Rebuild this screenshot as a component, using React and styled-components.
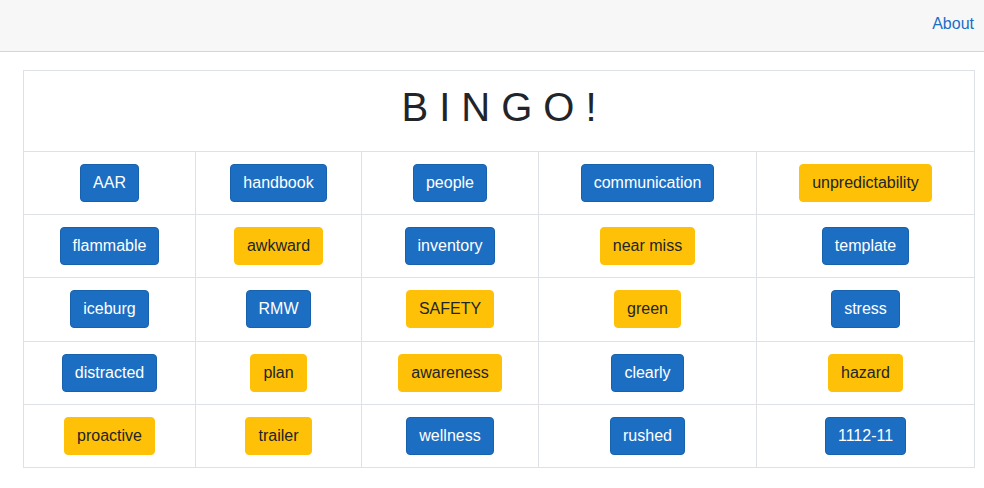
import React from 'react'
import styled, { createGlobalStyle } from 'styled-components'

const GlobalStyle = createGlobalStyle`
  html, body {
    margin: 0;
    padding: 0;
    background: #fff;
    font-family: "Liberation Sans", Arial, sans-serif;
    color: #212529;
  }
  * { box-sizing: border-box; }
`

const TopRow = styled.header`
  height: 52px;
  background: #f7f7f7;
  border-bottom: 1px solid #d6d5d5;
  display: flex;
  align-items: center;
  justify-content: flex-end;
  padding: 0 10px 3px 0;
`

const NavLink = styled.a`
  color: #1a6ec8;
  font-size: 16px;
  text-decoration: none;
  cursor: pointer;
`

const Content = styled.main`
  padding: 18px 11px 0 23px;
`

const Board = styled.table`
  width: 951px;
  table-layout: fixed;
  border-collapse: collapse;
  border: 1px solid #dee2e6;
`

const WordRow = styled.tr`
  height: 63.2px;
`

const Cell = styled.td`
  border: 1px solid #dee2e6;
  padding: 12px;
  text-align: center;
  vertical-align: middle;
`

const Title = styled.h1`
  margin: 0 0 8px;
  font-size: 40px;
  font-weight: 400;
  line-height: 48px;
  letter-spacing: 11px;
  padding-left: 11px;
`

const Word = styled.button`
  font-family: "Liberation Sans", Arial, sans-serif;
  font-size: 16px;
  line-height: 24px;
  padding: 6px 12px;
  border-radius: 4px;
  border: 1px solid ${p => (p.$marked ? '#ffc107' : '#1861ac')};
  background: ${p => (p.$marked ? '#ffc107' : '#1b6ec2')};
  color: ${p => (p.$marked ? '#212529' : '#fff')};
  white-space: nowrap;
  cursor: pointer;
`

const widths = [172, 166, 177, 218, 218]

const words = [
  [['AAR', 0], ['handbook', 0], ['people', 0], ['communication', 0], ['unpredictability', 1]],
  [['flammable', 0], ['awkward', 1], ['inventory', 0], ['near miss', 1], ['template', 0]],
  [['iceburg', 0], ['RMW', 0], ['SAFETY', 1], ['green', 1], ['stress', 0]],
  [['distracted', 0], ['plan', 1], ['awareness', 1], ['clearly', 0], ['hazard', 1]],
  [['proactive', 1], ['trailer', 1], ['wellness', 0], ['rushed', 0], ['1112-11', 0]],
]

export default function App() {
  return (
    <>
      <GlobalStyle />
      <TopRow>
        <NavLink>About</NavLink>
      </TopRow>
      <Content>
        <Board>
          <colgroup>
            {widths.map((w, i) => <col key={i} style={{ width: w }} />)}
          </colgroup>
          <tbody>
            <tr>
              <Cell colSpan={5}>
                <Title>BINGO!</Title>
              </Cell>
            </tr>
            {words.map((row, r) => (
              <WordRow key={r}>
                {row.map(([text, marked]) => (
                  <Cell key={text}>
                    <Word $marked={!!marked}>{text}</Word>
                  </Cell>
                ))}
              </WordRow>
            ))}
          </tbody>
        </Board>
      </Content>
    </>
  )
}
